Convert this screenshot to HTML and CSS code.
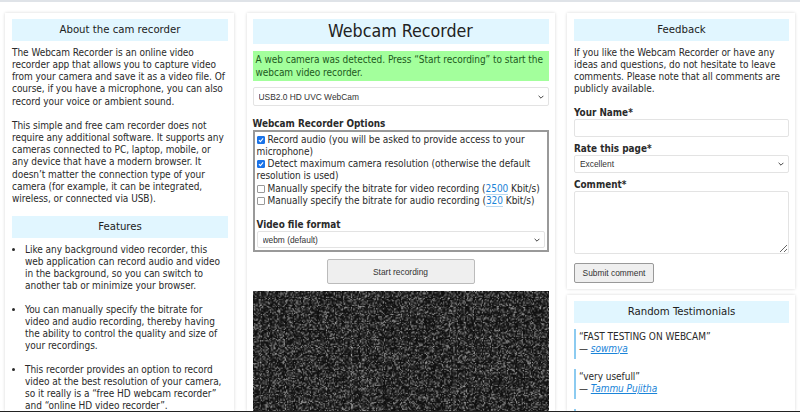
FILE: index.html
```html
<!DOCTYPE html>
<html lang="en">
<head>
	<meta charset="UTF-8">
	<title>Webcam Recorder</title>
	<link rel="stylesheet" href="styles.css">
</head>
<body>
	<div class="topbar"></div>
	<div class="columns">
		<div class="col col-left">
			<div class="card card-fill">
				<h3 class="title">About the cam recorder</h3>
				<p>The Webcam Recorder is an online video recorder app that allows you to capture video from your camera and save it as a video file. Of course, if you have a microphone, you can also record your voice or ambient sound.</p>
				<p>This simple and free cam recorder does not require any additional software. It supports any cameras connected to PC, laptop, mobile, or any device that have a modern browser. It doesn’t matter the connection type of your camera (for example, it can be integrated, wireless, or connected via USB).</p>
				<h3 class="title title-features">Features</h3>
				<ul class="features">
					<li>Like any background video recorder, this web application can record audio and video in the background, so you can switch to another tab or minimize your browser.</li>
					<li>You can manually specify the bitrate for video and audio recording, thereby having the ability to control the quality and size of your recordings.</li>
					<li>This recorder provides an option to record video at the best resolution of your camera, so it really is a “free HD webcam recorder” and “online HD video recorder”.</li>
				</ul>
			</div>
		</div>
		<div class="col col-mid">
			<div class="card card-fill">
				<h1 class="title title-big">Webcam Recorder</h1>
				<div class="alert">A web camera was detected. Press “Start recording” to start the webcam video recorder.</div>
				<select class="field select-cam"><option>USB2.0 HD UVC WebCam</option></select>
				<div class="options-label">Webcam Recorder Options</div>
				<div class="options">
					<label class="opt"><input type="checkbox" checked>Record audio (you will be asked to provide access to your microphone)</label>
					<label class="opt"><input type="checkbox" checked>Detect maximum camera resolution (otherwise the default resolution is used)</label>
					<label class="opt"><input type="checkbox">Manually specify the bitrate for video recording (<span class="num">2500</span> Kbit/s)</label>
					<label class="opt"><input type="checkbox">Manually specify the bitrate for audio recording (<span class="num">320</span> Kbit/s)</label>
					<div class="format-label">Video file format</div>
					<select class="field select-format"><option>webm (default)</option></select>
				</div>
				<div class="start-row"><button class="btn-start">Start recording</button></div>
				<canvas id="noise" class="noise" width="260" height="105"></canvas>
			</div>
		</div>
		<div class="col col-right">
			<div class="card card-feedback">
				<h3 class="title">Feedback</h3>
				<p class="intro">If you like the Webcam Recorder or have any ideas and questions, do not hesitate to leave comments. Please note that all comments are publicly available.</p>
				<label class="form-label">Your Name*</label>
				<input class="field input-name" type="text">
				<label class="form-label">Rate this page*</label>
				<select class="field select-rate"><option>Excellent</option></select>
				<label class="form-label">Comment*</label>
				<textarea class="field comment"></textarea>
				<button class="btn-submit">Submit comment</button>
			</div>
			<div class="card card-fill">
				<h3 class="title">Random Testimonials</h3>
				<blockquote class="quote">“FAST TESTING ON WEBCAM”<br>— <a href="#">sowmya</a></blockquote>
				<blockquote class="quote">“very usefull”<br>— <a href="#">Tammu Pujitha</a></blockquote>
				<blockquote class="quote"></blockquote>
			</div>
		</div>
	</div>
	<div class="bottomline"></div>
	<script src="script.js"></script>
</body>
</html>
```
FILE: styles.css
```css
* {
	box-sizing: border-box;
}
html, body {
	margin: 0;
	height: 412px;
	overflow: hidden;
}
body {
	display: flex;
	flex-direction: column;
	background: #fff;
	color: #2a2a2a;
	font-family: "DejaVu Sans Condensed", "DejaVu Sans", Verdana, sans-serif;
	font-size: 10px;
	letter-spacing: -0.04px;
	line-height: 12.15px;
}
.topbar {
	height: 2px;
	flex: none;
	background: #dfe3e8;
}
.bottomline {
	height: 1px;
	flex: none;
	background: #222;
}
.columns {
	flex: 1;
	min-height: 0;
	display: flex;
	gap: 12.5px;
	padding: 11px 5px 0 5px;
	overflow: hidden;
}
.col {
	display: flex;
	flex-direction: column;
	gap: 6px;
	flex: none;
	min-height: 0;
}
.col-left {
	width: 229px;
}
.col-mid {
	width: 308px;
}
.col-right {
	width: 228px;
}
.card {
	background: #fff;
	box-shadow: 0 0 3px rgba(0, 0, 0, 0.16);
	padding: 6px 6px 6px 7px;
}
.card-fill {
	flex: 1;
	min-height: 0;
	overflow: hidden;
}
.card-feedback {
	flex: none;
}
.col-mid .card {
	padding: 6px;
}
.title {
	margin: 0;
	height: 22px;
	line-height: 22px;
	background: #e1f6ff;
	color: #222;
	font-size: 11.3px;
	letter-spacing: 0;
	font-weight: normal;
	text-align: center;
}
.title-features {
	margin-top: 11px;
}
.title-big {
	height: 25px;
	line-height: 25px;
	font-size: 17.7px;
}
p {
	margin: 6px 0 11px;
}
p + p {
	margin-top: 12.15px;
}
.features {
	margin: 5.5px 0 0;
	padding: 0 4.5px 0 13px;
	line-height: 12px;
}
.features li {
	margin-bottom: 12px;
}
.alert {
	margin-top: 7px;
	padding: 2px 3px;
	background: #a3ff9c;
	color: #1d5a1d;
	height: 30px;
	line-height: 13px;
}
.field {
	display: block;
	width: 100%;
	background: #fff;
	border: 1px solid #e3e3e3;
	border-radius: 2px;
	color: #333;
	font-family: "Liberation Sans", Arial, sans-serif;
	font-size: 8.4px;
	letter-spacing: 0;
}
select.field {
	appearance: none;
	padding-left: 5px;
	background: #fff url("data:image/svg+xml,%3Csvg xmlns='http://www.w3.org/2000/svg' viewBox='0 0 6 4'%3E%3Cpath d='M.6.8 3 3.2 5.4.8' fill='none' stroke='%23444' stroke-width='1'/%3E%3C/svg%3E") right 4px center / 6px 4px no-repeat;
}
.select-cam {
	margin-top: 6px;
	height: 19px;
}
.options-label, .format-label, .form-label {
	font-size: 9.9px;
	letter-spacing: 0;
	font-weight: bold;
}
.options-label {
	margin-top: 11px;
	line-height: 13px;
}
.options {
	border: 2px solid #999;
	padding: 2px;
}
.opt {
	display: block;
}
.opt input {
	appearance: none;
	display: inline-block;
	width: 8px;
	height: 8px;
	margin: 0 3px 0 0;
	vertical-align: -1px;
	background: #fff;
	border: 1px solid #999;
	border-radius: 1px;
}
.opt input:checked {
	border-color: #1a73e8;
	background: #1a73e8 url("data:image/svg+xml,%3Csvg xmlns='http://www.w3.org/2000/svg' viewBox='0 0 8 8'%3E%3Cpath d='M1.2 4.2 3.2 6.2 6.8 1.8' fill='none' stroke='%23fff' stroke-width='1.4'/%3E%3C/svg%3E") center / 100% no-repeat;
}
.num {
	color: #1a84d8;
	border-bottom: 1px solid #b8d8f0;
}
.format-label {
	margin-top: 12px;
}
.select-format {
	height: 17px;
}
.start-row {
	margin-top: 7px;
	text-align: center;
}
.btn-start {
	display: inline-block;
	vertical-align: top;
	width: 148px;
	height: 25px;
	background: #efefef;
	border: 1px solid #bbb;
	border-radius: 2px;
	color: #333;
	font-family: "Liberation Sans", Arial, sans-serif;
	font-size: 8.4px;
}
.noise {
	display: block;
	margin-top: 7px;
	width: 296px;
	height: 120px;
}
.intro {
	margin: 6px 0 11px;
}
.form-label {
	display: block;
	line-height: 12px;
}
.input-name {
	height: 18px;
	margin-bottom: 6px;
}
.select-rate {
	height: 18px;
	margin-bottom: 6px;
}
.comment {
	height: 63px;
	resize: vertical;
	margin-bottom: 9px;
}
.btn-submit {
	display: block;
	width: 80px;
	height: 20px;
	padding: 0;
	background: #efefef;
	border: 1px solid #999;
	border-radius: 2px;
	color: #333;
	font-family: "Liberation Sans", Arial, sans-serif;
	font-size: 8.4px;
}
.quote {
	margin: 6px 0 10px;
	height: 30px;
	padding: 2px 0 0 3px;
	border-left: 2px solid #8ccbf0;
}
.quote a {
	color: #1a84d8;
	font-style: italic;
}
```
FILE: script.js
```js
// fake camera feed: grey noise with a few brighter columns
var canvas = document.getElementById('noise');
var ctx = canvas.getContext('2d');
var img = ctx.createImageData(canvas.width, canvas.height);
var streaks = [6, 86, 96, 176, 185];
for (var y = 0; y < canvas.height; y++) {
	for (var x = 0; x < canvas.width; x++) {
		var r = Math.random();
		var v = r * r * r * 140 + 14;
		if (streaks.indexOf(x) >= 0) v += 22;
		var i = (y * canvas.width + x) * 4;
		img.data[i] = img.data[i + 1] = img.data[i + 2] = v;
		img.data[i + 3] = 255;
	}
}
ctx.putImageData(img, 0, 0);
```
